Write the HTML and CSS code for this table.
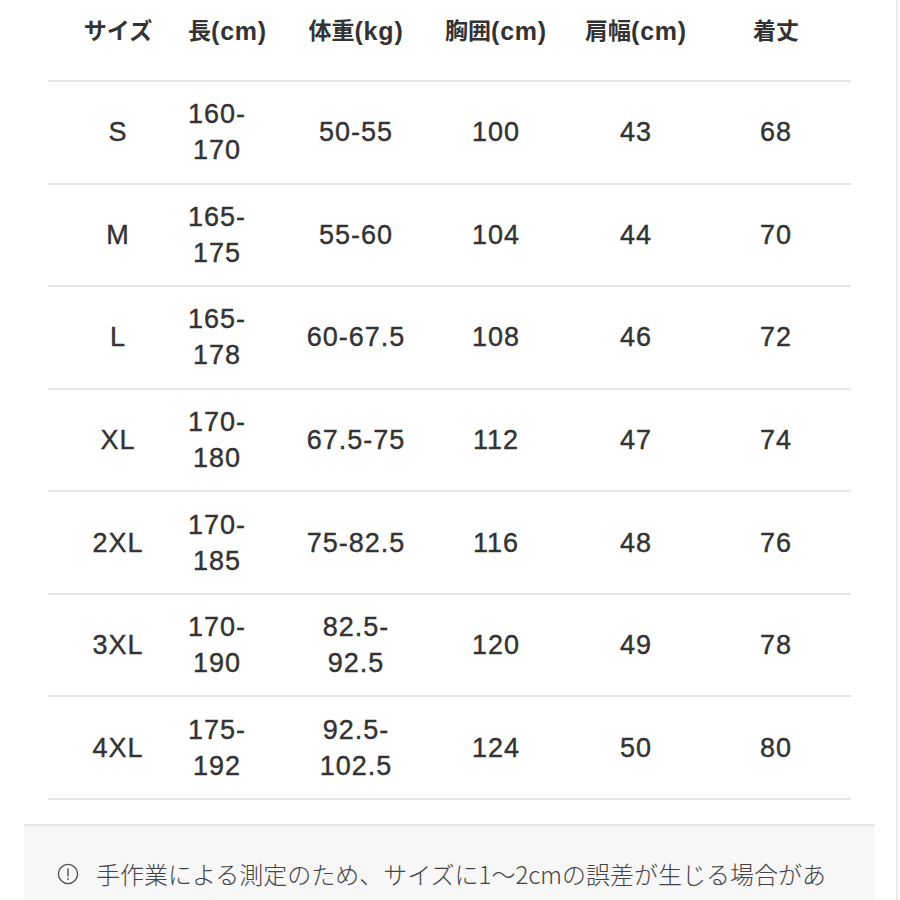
FILE: index.html
```html
<!DOCTYPE html>
<html lang="ja">
<head>
<meta charset="utf-8">
<link rel="stylesheet" href="styles.css">
</head>
<body>
<div class="page">
  <div class="container">
    <div class="table">
      <div class="row head">
        <div class="c c1">サイズ</div>
        <div class="c c2 start">長<span class="unit">(cm)</span></div>
        <div class="c c3">体重<span class="unit">(kg)</span></div>
        <div class="c c4">胸囲<span class="unit">(cm)</span></div>
        <div class="c c5">肩幅<span class="unit">(cm)</span></div>
        <div class="c c6">着丈</div>
      </div>
      <div class="row">
        <div class="c c1">S</div>
        <div class="c c2"><span>160-<br>170</span></div>
        <div class="c c3">50-55</div>
        <div class="c c4">100</div>
        <div class="c c5">43</div>
        <div class="c c6">68</div>
      </div>
      <div class="row">
        <div class="c c1">M</div>
        <div class="c c2"><span>165-<br>175</span></div>
        <div class="c c3">55-60</div>
        <div class="c c4">104</div>
        <div class="c c5">44</div>
        <div class="c c6">70</div>
      </div>
      <div class="row">
        <div class="c c1">L</div>
        <div class="c c2"><span>165-<br>178</span></div>
        <div class="c c3">60-67.5</div>
        <div class="c c4">108</div>
        <div class="c c5">46</div>
        <div class="c c6">72</div>
      </div>
      <div class="row">
        <div class="c c1">XL</div>
        <div class="c c2"><span>170-<br>180</span></div>
        <div class="c c3">67.5-75</div>
        <div class="c c4">112</div>
        <div class="c c5">47</div>
        <div class="c c6">74</div>
      </div>
      <div class="row">
        <div class="c c1">2XL</div>
        <div class="c c2"><span>170-<br>185</span></div>
        <div class="c c3">75-82.5</div>
        <div class="c c4">116</div>
        <div class="c c5">48</div>
        <div class="c c6">76</div>
      </div>
      <div class="row">
        <div class="c c1">3XL</div>
        <div class="c c2"><span>170-<br>190</span></div>
        <div class="c c3"><span>82.5-<br>92.5</span></div>
        <div class="c c4">120</div>
        <div class="c c5">49</div>
        <div class="c c6">78</div>
      </div>
      <div class="row">
        <div class="c c1">4XL</div>
        <div class="c c2"><span>175-<br>192</span></div>
        <div class="c c3"><span>92.5-<br>102.5</span></div>
        <div class="c c4">124</div>
        <div class="c c5">50</div>
        <div class="c c6">80</div>
      </div>
    </div>
    <div class="note">
      <svg class="note-icon" width="22" height="22" viewBox="0 0 22 22">
        <circle cx="11" cy="11" r="9.6" fill="none" stroke="#555" stroke-width="1.4"/>
        <line x1="11" y1="6" x2="11" y2="13" stroke="#555" stroke-width="1.5" stroke-linecap="round"/>
        <circle cx="11" cy="16" r="0.9" fill="#555"/>
      </svg>
      <p class="note-text">手作業による測定のため、サイズに1〜2cmの誤差が生じる場合があります。ご了承ください。</p>
    </div>
  </div>
</div>
</body>
</html>
```

FILE: styles.css
```css
html, body {
  margin: 0;
  padding: 0;
  background: #fff;
}

.page {
  width: 896px;
  height: 900px;
  overflow: hidden;
  border-right: 2px solid #ececec;
}

.container {
  width: 851px;
  margin-left: 24px;
}

.table {
  margin: 0 24px;
  width: 803px;
  font-family: "Liberation Sans", "Noto Sans CJK JP", sans-serif;
  color: #333;
}

.row {
  display: flex;
  height: 100.57px;
  border-bottom: 2px solid #e6e6e6;
  font-size: 27px;
  letter-spacing: 1px;
  line-height: 36px;
  -webkit-text-stroke: 0.4px #333;
}

.row.head {
  height: 62px;
  padding-bottom: 18px;
  font-size: 23px;
  font-weight: 700;
  letter-spacing: 0;
  -webkit-text-stroke: 0;
}

.unit {
  font-size: 25px;
  letter-spacing: 0.8px;
}

.c {
  display: flex;
  justify-content: center;
  align-items: center;
  white-space: nowrap;
  text-align: center;
}

.c.start {
  justify-content: flex-start;
}

.c1 { width: 140px; }
.c2 { width: 58px; }
.c3 { width: 220px; }
.c4 { width: 60px; }
.c5 { width: 220px; }
.c6 { width: 60px; }

.note {
  margin-top: 24px;
  background: #f7f7f7;
  border-top: 2px solid #e6e6e6;
  padding: 30px 30px 30px 33px;
  display: flex;
  align-items: flex-start;
  gap: 17px;
}

.note-icon {
  flex: none;
  margin-top: 7px;
}

.note-text {
  margin: 0;
  font-family: "Noto Sans CJK JP", sans-serif;
  font-weight: 300;
  font-size: 24px;
  line-height: 36px;
  color: #444;
}
```
